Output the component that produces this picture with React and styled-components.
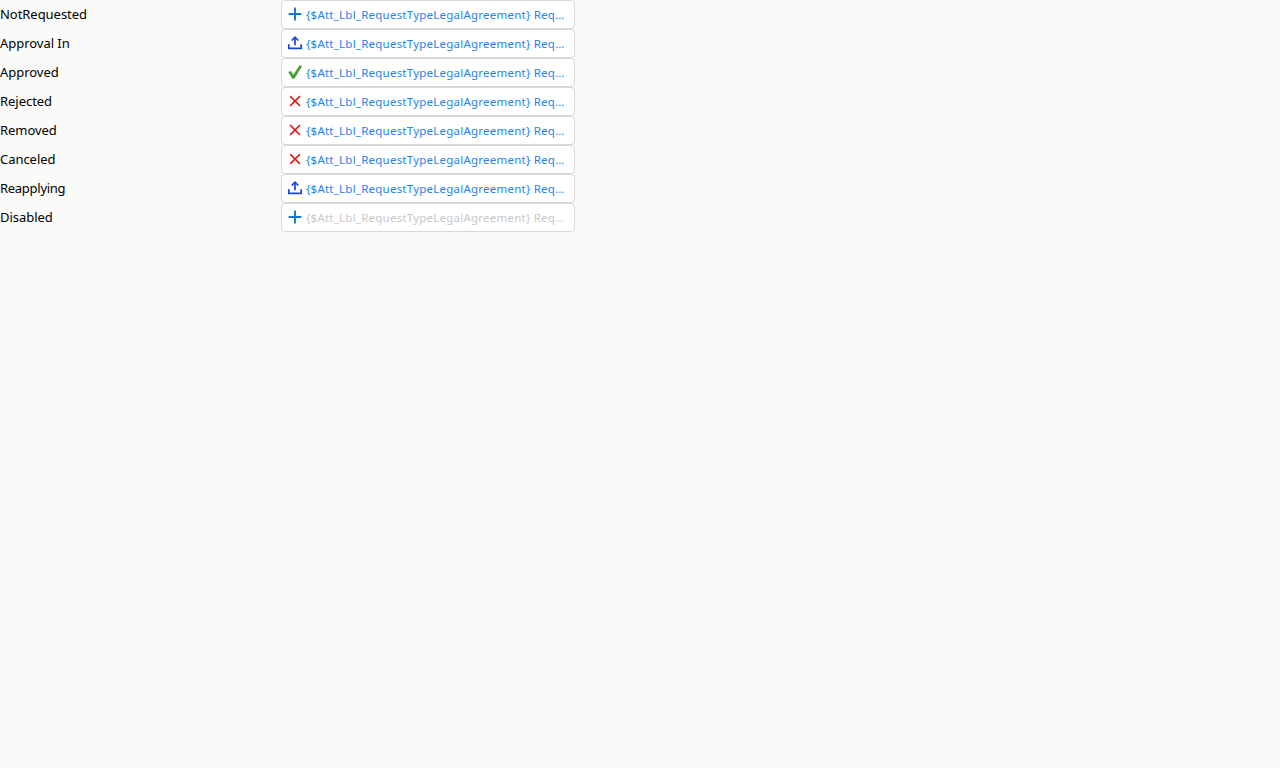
import React from "react";
import styled, { createGlobalStyle } from "styled-components";

const GlobalStyle = createGlobalStyle`
  body {
    margin: 0;
    background: #fafaf8;
    font-family: "Noto Sans", sans-serif;
    font-size: 13px;
    color: #000;
  }
`;

const List = styled.div`
  display: flex;
  flex-direction: column;
`;

const Row = styled.div`
  display: grid;
  grid-template-columns: 281px 294px;
  height: 29px;
`;

const Label = styled.div`
  line-height: 29px;
  letter-spacing: ${({ $tracking }) => $tracking || "-0.04px"};
  white-space: nowrap;
`;

const RequestButton = styled.button`
  display: flex;
  align-items: center;
  gap: 3px;
  box-sizing: border-box;
  width: 294px;
  height: 29px;
  margin: 0;
  padding: 0 7px 0 5px;
  border: 1px solid #d8d8d8;
  border-radius: 4px;
  background: #fff;
  color: #2583ec;
  font: 11.5px "Noto Sans", sans-serif;
  letter-spacing: 0.23px;
  text-align: left;

  &:disabled {
    color: #c8c8c8;
  }
`;

const Caption = styled.span`
  flex: 1;
  min-width: 0;
  overflow: hidden;
  text-overflow: ellipsis;
  white-space: nowrap;
`;

const Icon = styled.svg`
  flex: none;
  width: 16px;
  height: 16px;
  margin-bottom: 1px;
  fill: none;
`;

const PlusIcon = () => (
  <Icon viewBox="0 0 16 16">
    <path d="M8 1.6V14.4M1.6 8H14.4" stroke="#1277d3" strokeWidth="1.9" />
  </Icon>
);

const UploadIcon = () => (
  <Icon viewBox="0 0 16 16">
    <path d="M1.8 9.2V13.4H14.2V9.2M8 10.2V2.4M4.7 5.5L8 2.2L11.3 5.5" stroke="#1646dc" strokeWidth="1.7" />
  </Icon>
);

const CheckIcon = () => (
  <Icon viewBox="0 0 16 16">
    <path d="M1.2 8.1L3.9 7.1L6.3 10.7L12.6 1.3L15.2 2L7.4 14.7H5.3Z" fill="#4a9f35" />
  </Icon>
);

const CrossIcon = () => (
  <Icon viewBox="0 0 16 16">
    <path d="M3.1 3.1L12.9 12.9M12.9 3.1L3.1 12.9" stroke="#e01b1b" strokeWidth="1.5" />
  </Icon>
);

const statuses = [
  { label: "NotRequested", Mark: PlusIcon },
  { label: "Approval In", Mark: UploadIcon },
  { label: "Approved", Mark: CheckIcon },
  { label: "Rejected", Mark: CrossIcon },
  { label: "Removed", Mark: CrossIcon },
  { label: "Canceled", Mark: CrossIcon },
  { label: "Reapplying", Mark: UploadIcon, tracking: "-0.28px" },
  { label: "Disabled", Mark: PlusIcon, disabled: true },
];

export default function App() {
  return (
    <>
      <GlobalStyle />
      <List>
        {statuses.map(({ label, Mark, disabled, tracking }) => (
          <Row key={label}>
            <Label $tracking={tracking}>{label}</Label>
            <RequestButton disabled={disabled}>
              <Mark />
              <Caption>{"{$Att_Lbl_RequestTypeLegalAgreement} Request"}</Caption>
            </RequestButton>
          </Row>
        ))}
      </List>
    </>
  );
}
